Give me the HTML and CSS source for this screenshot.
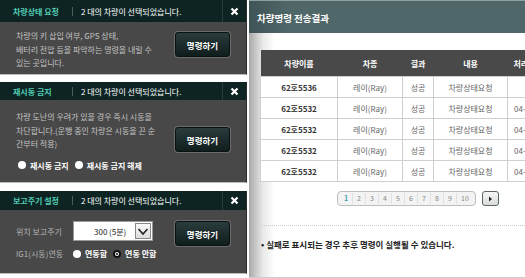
FILE: index.html
```html
<!DOCTYPE html>
<html>
<head>
  <title>차량명령</title>
  <meta name="viewport" content="width=device-width, initial-scale=1.0">
  <link rel="stylesheet" href="styles.css">
</head>
<body>
  <div class="left">

    <!-- 차량상태 요청 -->
    <div class="panel p1">
      <div class="panel-head">
        <span class="ptitle">차량상태 요청</span>
        <span class="bar"></span>
        <span class="msg">2 대의 차량이 선택되었습니다.</span>
        <a class="close"><svg width="9" height="9" viewBox="0 0 9 9"><path d="M1.5 1.5 L7.5 7.5 M7.5 1.5 L1.5 7.5" stroke="#fff" stroke-width="2.2"/></svg></a>
      </div>
      <div class="panel-body">
        <p class="desc">차량의 키 삽입 여부, GPS 상태,<br>배터리 전압 등을 파악하는 명령을 내릴 수<br>있는 곳입니다.</p>
        <button class="cmd">명령하기</button>
      </div>
    </div>

    <!-- 재시동 금지 -->
    <div class="panel p2">
      <div class="panel-head">
        <span class="ptitle">재시동 금지</span>
        <span class="bar"></span>
        <span class="msg">2 대의 차량이 선택되었습니다.</span>
        <a class="close"><svg width="9" height="9" viewBox="0 0 9 9"><path d="M1.5 1.5 L7.5 7.5 M7.5 1.5 L1.5 7.5" stroke="#fff" stroke-width="2.2"/></svg></a>
      </div>
      <div class="panel-body">
        <div>
          <p class="desc">차량 도난의 우려가 있을 경우 즉시 시동을<br>차단합니다.(운행 중인 차량은 시동을 끈 순<br>간부터 적용)</p>
          <div class="radios">
            <label><span class="radio"></span>재시동 금지</label>
            <label><span class="radio"></span>재시동 금지 해제</label>
          </div>
        </div>
        <button class="cmd">명령하기</button>
      </div>
    </div>

    <!-- 보고주기 설정 -->
    <div class="panel p3">
      <div class="panel-head">
        <span class="ptitle">보고주기 설정</span>
        <span class="bar"></span>
        <span class="msg">2 대의 차량이 선택되었습니다.</span>
        <a class="close"><svg width="9" height="9" viewBox="0 0 9 9"><path d="M1.5 1.5 L7.5 7.5 M7.5 1.5 L1.5 7.5" stroke="#fff" stroke-width="2.2"/></svg></a>
      </div>
      <div class="panel-body">
        <div class="form">
          <span class="lbl">위치 보고주기</span>
          <div class="select">
            <span>300 (5분)</span>
            <span class="arrow"><svg width="12" height="9" viewBox="0 0 12 9"><path d="M1.5 2 L6 7 L10.5 2" fill="none" stroke="#222" stroke-width="1.6"/></svg></span>
          </div>
          <span class="lbl">IG1(시동)연동</span>
          <div class="radios">
            <label><span class="radio"></span>연동함</label>
            <label><span class="radio on"></span>연동 안함</label>
          </div>
        </div>
        <button class="cmd">명령하기</button>
      </div>
    </div>
  </div>

  <div class="result">
    <div class="result-head">차량명령 전송결과</div>
    <div class="result-body">
      <table class="grid">
        <colgroup>
          <col style="width:77px"><col style="width:65px"><col style="width:31px"><col style="width:74px"><col style="width:70px">
        </colgroup>
        <tr><th>차량이름</th><th>차종</th><th>결과</th><th>내용</th><th class="date">처리</th></tr>
        <tr><td class="car">62호5536</td><td>레이(Ray)</td><td>성공</td><td>차량상태요청</td><td></td></tr>
        <tr><td class="car">62호5532</td><td>레이(Ray)</td><td>성공</td><td>차량상태요청</td><td class="date">04-</td></tr>
        <tr><td class="car">62호5532</td><td>레이(Ray)</td><td>성공</td><td>차량상태요청</td><td class="date">04-</td></tr>
        <tr><td class="car">62호5532</td><td>레이(Ray)</td><td>성공</td><td>차량상태요청</td><td class="date">04-</td></tr>
        <tr><td class="car">62호5532</td><td>레이(Ray)</td><td>성공</td><td>차량상태요청</td><td class="date">04-</td></tr>
      </table>

      <div class="paging">
        <div class="pages">
          <span class="cur">1</span><span>2</span><span>3</span><span>4</span><span>5</span><span>6</span><span>7</span><span>8</span><span>9</span><span>10</span>
        </div>
        <span class="next"><svg width="5" height="6" viewBox="0 0 5 6"><path d="M1 0.5 L4 3 L1 5.5 Z" fill="#222"/></svg></span>
      </div>

      <div class="note">• 실패로 표시되는 경우 추후 명령이 실행될 수 있습니다.</div>
    </div>
  </div>
</body>
</html>
```

FILE: styles.css
```css
body {
  margin: 0;
  width: 525px;
  height: 278px;
  overflow: hidden;
  background: #fff;
  display: flex;
  gap: 2px;
  font-family: "Noto Sans CJK KR", "Noto Sans", sans-serif;
}

/* left column */
.left {
  width: 247px;
  flex-shrink: 0;
}

.panel {
  background: #484848;
  border-right: 1px solid #2b2b2b;
  border-bottom: 1px solid #bbb;
}

.p1 { margin-bottom: 7px; }
.p2 { margin-bottom: 8px; }

.panel-head {
  height: 18px;
  background: #0d2423;
  display: flex;
  align-items: center;
  font-size: 8px;
}

.p1 .panel-head { height: 22px; }
.p3 .panel-head { height: 19px; }

.ptitle {
  color: #52cdb5;
  font-weight: bold;
  padding-left: 13px;
  width: 52px;
}

.bar {
  width: 1px;
  height: 9px;
  background: #4b5e5d;
  margin: 0 8px 0 7px;
}

.msg {
  color: #fff;
  flex: 1;
}

.close {
  width: 23px;
  height: 100%;
  border-left: 1px solid #2c3c3c;
  display: flex;
  align-items: center;
  justify-content: center;
}

.panel-body {
  display: flex;
  justify-content: space-between;
  align-items: flex-start;
  padding: 0 16px 0 16px;
}

.p1 .panel-body { height: 52px; padding-top: 7px; box-sizing: border-box; }
.p2 .panel-body { height: 82px; padding-top: 10px; box-sizing: border-box; }
.p3 .panel-body { height: 63px; padding-top: 11px; box-sizing: border-box; }

.desc {
  margin: 0;
  color: #c4c4c4;
  font-size: 8px;
  line-height: 13.5px;
}

.cmd {
  width: 55px;
  height: 25px;
  background: linear-gradient(#2a3c3c, #101d1d);
  border: 1px solid #081212;
  border-radius: 3px;
  box-shadow: 0 0 0 1px #6b6b6b;
  color: #fff;
  font-family: inherit;
  font-weight: bold;
  font-size: 8.5px;
  padding: 0;
}

.p1 .cmd { margin-top: 3px; }
.p2 .cmd { margin-top: 17px; }

.radios {
  display: flex;
  gap: 6px;
  align-items: center;
}

.p2 .radios { margin-top: 9px; padding-left: 2px; }

.radios label {
  display: flex;
  align-items: center;
  gap: 4px;
  color: #fff;
  font-weight: bold;
  font-size: 8px;
}

.radio {
  width: 8px;
  height: 8px;
  border-radius: 50%;
  background: #fff;
  box-sizing: border-box;
}

.radio.on {
  border: 2px solid #111;
  background: #fff;
  position: relative;
}

.radio.on::after {
  content: "";
  position: absolute;
  left: 1px;
  top: 1px;
  width: 2px;
  height: 2px;
  background: #111;
  border-radius: 50%;
}

.form {
  display: grid;
  grid-template-columns: 57px auto;
  row-gap: 7px;
  align-items: center;
  font-size: 8px;
}

.lbl {
  color: #b4b4b4;
}

.select {
  width: 80px;
  height: 20px;
  background: #fff;
  border: 1px solid #9a9a9a;
  box-sizing: border-box;
  display: flex;
  align-items: center;
  justify-content: space-between;
  padding-left: 20px;
  color: #222;
}

.arrow {
  width: 16px;
  height: 16px;
  margin-right: 1px;
  border: 1px solid #888;
  box-sizing: border-box;
  background: linear-gradient(#fafafa, #dcdcdc);
  display: flex;
  align-items: center;
  justify-content: center;
}

/* right column */
.result {
  flex: 1;
  overflow: hidden;
  display: flex;
  flex-direction: column;
  border-bottom: 1px solid #ccc;
}

.result-head {
  height: 33px;
  flex-shrink: 0;
  background: linear-gradient(to right, #3f5456, #4f6769 40px);
  color: #fff;
  font-weight: bold;
  font-size: 9.5px;
  line-height: 35px;
  padding-left: 8px;
  border-top: 1px solid #8fa0a0;
  box-sizing: border-box;
}

.result-body {
  flex: 1;
  background: linear-gradient(to right, #a9a9a9, #e9e9e9 14px, #fff 26px);
  padding: 17px 0 0 11px;
}

.grid {
  border-collapse: collapse;
  table-layout: fixed;
  width: 317px;
  font-size: 8px;
  text-align: center;
}

.grid th {
  height: 24px;
  background: #494949;
  color: #fff;
  font-weight: bold;
  border: 0;
}

.grid td {
  height: 20px;
  padding: 0;
  background: #fff;
  border: 1px solid #cfcfcf;
  color: #666;
  white-space: nowrap;
  overflow: hidden;
}

.grid td.car {
  color: #333;
  font-weight: bold;
}

.grid .date {
  text-align: left;
  padding-left: 6px;
}

.paging {
  display: flex;
  align-items: center;
  gap: 6px;
  margin: 9px 0 0 77px;
}

.pages {
  display: flex;
  height: 15px;
  padding: 0 2px;
  border: 1px solid #bdbdbd;
  border-radius: 4px;
  background: #f3f3f3;
  box-sizing: border-box;
  align-items: center;
}

.pages span {
  width: 12px;
  font-size: 7px;
  text-align: center;
  color: #888;
  border-right: 1px solid #e0e0e0;
  line-height: 11px;
}

.pages span:last-child {
  width: 16px;
  border-right: 0;
}

.pages .cur {
  color: #3c9fb0;
  font-weight: bold;
}

.next {
  width: 17px;
  height: 15px;
  border: 1px solid #5c6464;
  border-radius: 3px;
  box-sizing: border-box;
  background: linear-gradient(#f6f6f6, #d8dcdc);
  display: flex;
  align-items: center;
  justify-content: center;
}

.note {
  margin-top: 19px;
  padding-top: 12px;
  border-top: 1px dotted #ccc;
  font-size: 8.5px;
  font-weight: bold;
  color: #222;
  padding-left: 1px;
}
```
